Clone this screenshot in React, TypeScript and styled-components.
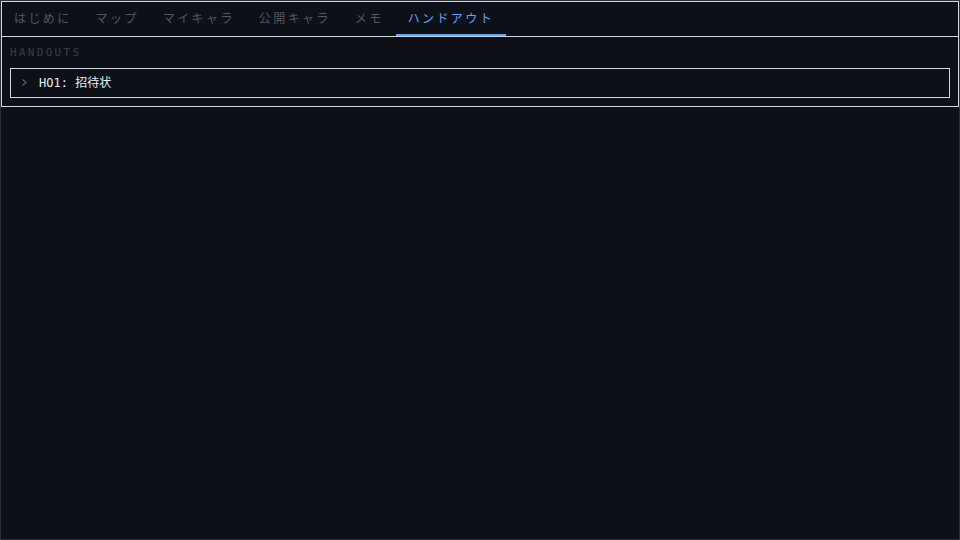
import React, { useState } from "react";
import styled, { createGlobalStyle } from "styled-components";

const GlobalStyle = createGlobalStyle`
  * {
    box-sizing: border-box;
  }

  html,
  body {
    margin: 0;
    padding: 0;
    background: #0d1117;
  }
`;

const Screen = styled.div`
  width: 960px;
  height: 540px;
  background: #0d1117;
  border: 1px solid #2a3038;
  font-family: "DejaVu Sans Mono", "Noto Sans CJK JP", monospace;
  color: #e6edf3;
`;

const Panel = styled.section`
  border: 1px solid #d0d7de;
  background: #0d1117;
`;

const TabBar = styled.nav`
  display: flex;
  height: 35px;
  border-bottom: 1px solid #d0d7de;
`;

const Tab = styled.button<{ $active?: boolean }>`
  height: 34px;
  padding: 0 12px;
  margin: 0;
  background: none;
  border: none;
  border-bottom: 2px solid ${(p) => (p.$active ? "#58a6ff" : "transparent")};
  color: ${(p) => (p.$active ? "#58a6ff" : "#50575f")};
  font-family: "Noto Sans CJK JP", "DejaVu Sans", sans-serif;
  font-size: 12px;
  letter-spacing: 0.2em;
  line-height: 30px;
  cursor: pointer;
`;

const Body = styled.div`
  padding: 8px;
`;

const SectionLabel = styled.div`
  font-size: 11px;
  line-height: 16px;
  letter-spacing: 2.3px;
  color: #363d45;
  margin-bottom: 7px;
`;

const HandoutRow = styled.div`
  display: flex;
  align-items: center;
  gap: 12px;
  height: 30px;
  padding: 0 0 1px 11px;
  border: 1px solid #d0d7de;
  cursor: pointer;
`;

const Chevron = styled.svg`
  flex: none;
  width: 5px;
  height: 7px;
  color: #7d858f;
`;

const HandoutTitle = styled.span`
  font-size: 12px;
  line-height: 14px;
  color: #e6edf3;
`;

const tabs = ["はじめに", "マップ", "マイキャラ", "公開キャラ", "メモ", "ハンドアウト"];

const handouts = [{ id: "HO1", title: "招待状" }];

export default function App() {
  const [active, setActive] = useState("ハンドアウト");

  return (
    <>
      <GlobalStyle />
      <Screen>
        <Panel>
          <TabBar>
            {tabs.map((t) => (
              <Tab key={t} $active={t === active} onClick={() => setActive(t)}>
                {t}
              </Tab>
            ))}
          </TabBar>
          <Body>
            <SectionLabel>HANDOUTS</SectionLabel>
            {handouts.map((h) => (
              <HandoutRow key={h.id}>
                <Chevron viewBox="0 0 5 7">
                  <polyline
                    points="0.5,0.5 4.3,3.5 0.5,6.5"
                    fill="none"
                    stroke="currentColor"
                    strokeWidth="1"
                  />
                </Chevron>
                <HandoutTitle>
                  {h.id}: {h.title}
                </HandoutTitle>
              </HandoutRow>
            ))}
          </Body>
        </Panel>
      </Screen>
    </>
  );
}
